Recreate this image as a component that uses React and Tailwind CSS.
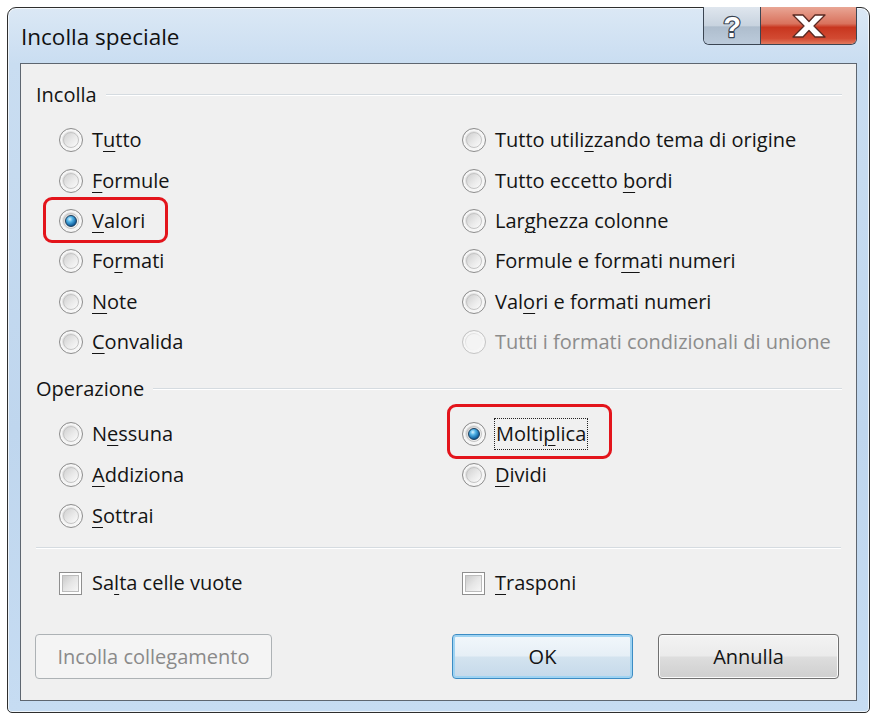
import React from 'react';

const FONT = { fontFamily: '"Open Sans", "Noto Sans", "Liberation Sans", sans-serif' };

// label with the mnemonic letter underlined
const Label = ({ text, u, disabled }) => {
  const cls = disabled ? 'text-[#8c8c8c]' : 'text-[#141414]';
  if (u < 0 || u === undefined) return <span className={cls}>{text}</span>;
  return (
    <span className={cls}>
      {text.slice(0, u)}
      <span className="underline decoration-1 underline-offset-[4px]">{text[u]}</span>
      {text.slice(u + 1)}
    </span>
  );
};

const Radio = ({ checked, disabled }) => (
  <span
    className={`relative shrink-0 w-[24px] h-[24px] rounded-full border ${
      disabled ? 'border-[#c4c4c4]' : 'border-[#8d8d8d]'
    } bg-[linear-gradient(135deg,#cfcfcf_0%,#eeeeee_50%,#ffffff_100%)] shadow-[inset_0_0_0_2px_#f6f6f6]`}
  >
    <span
      className={`absolute inset-[3px] rounded-full ${
        disabled
          ? 'bg-[#f4f4f4]'
          : 'bg-[linear-gradient(135deg,#d0d0d0_0%,#eaeaea_55%,#fbfbfb_100%)] border border-[#c4c4c4]'
      }`}
    />
    {checked && (
      <span className="absolute inset-[5px] rounded-full border border-[#1d3f5e] bg-[radial-gradient(circle_at_38%_32%,#d8f2ff_0%,#52b3e6_30%,#11609f_70%,#0a3a66_100%)]" />
    )}
  </span>
);

const Checkbox = () => (
  <span className="relative shrink-0 w-[23px] h-[23px] border border-[#8f8f8f] bg-white">
    <span className="absolute inset-[2px] border border-[#bcbcbc] bg-[linear-gradient(135deg,#cbcbcb_0%,#e6e6e6_50%,#f6f6f6_100%)]" />
  </span>
);

const RadioRow = ({ item }) => {
  if (!item) return <div />;
  const { text, u, checked, disabled, mark, focus } = item;
  return (
    <div className="relative flex items-center gap-[9px]">
      {mark === 'valori' && (
        <span className="absolute left-[-16px] top-[-4px] w-[125px] h-[46px] rounded-[9px] border-[3px] border-[#e3141b]" />
      )}
      {mark === 'molt' && (
        <span className="absolute left-[-15px] top-[-9px] w-[165px] h-[55px] rounded-[9px] border-[3px] border-[#e3141b]" />
      )}
      <Radio checked={checked} disabled={disabled} />
      <span className={focus ? 'outline outline-1 outline-dotted outline-[#222] px-[1px]' : ''}>
        <Label text={text} u={u} disabled={disabled} />
      </span>
    </div>
  );
};

const GroupHeader = ({ title, className }) => (
  <div className={`flex items-center h-[24px] pl-[15px] pr-[14px] ${className}`}>
    <span className="text-[#141414]">{title}</span>
    <span className="flex-1 ml-[9px] h-[2px] border-t border-[#d5dbe0] border-b border-b-white" />
  </div>
);

const pasteRows = [
  [{ text: 'Tutto', u: 1 }, { text: 'Tutto utilizzando tema di origine', u: 11 }],
  [{ text: 'Formule', u: 0 }, { text: 'Tutto eccetto bordi', u: 14 }],
  [{ text: 'Valori', u: 0, checked: true, mark: 'valori' }, { text: 'Larghezza colonne', u: 3 }],
  [{ text: 'Formati', u: 2 }, { text: 'Formule e formati numeri', u: 13 }],
  [{ text: 'Note', u: 0 }, { text: 'Valori e formati numeri', u: 3 }],
  [{ text: 'Convalida', u: 0 }, { text: 'Tutti i formati condizionali di unione', u: -1, disabled: true }],
];

const opRows = [
  [{ text: 'Nessuna', u: 1 }, { text: 'Moltiplica', u: 5, checked: true, mark: 'molt', focus: true }],
  [{ text: 'Addiziona', u: 0 }, { text: 'Dividi', u: 0 }],
  [{ text: 'Sottrai', u: 0 }, null],
];

const Button = ({ children, variant }) => {
  const styles = {
    disabled: 'border-[#adb2b5] bg-[#f4f4f4] text-[#8a8a8a]',
    default:
      'border-[#3c8cc4] text-[#141414] bg-[linear-gradient(#f2f7fb_0%,#e6eff6_48%,#d3e3ef_52%,#c5d9ea_100%)] shadow-[inset_0_0_0_2px_#9fd3f2]',
    normal:
      'border-[#707070] text-[#141414] bg-[linear-gradient(#f3f3f3_0%,#ebebeb_48%,#dddddd_52%,#cfcfcf_100%)] shadow-[inset_0_0_0_1px_#fbfbfb]',
  };
  return (
    <div className={`h-[45px] flex items-center justify-center rounded-[4px] border ${styles[variant]}`}>
      {children}
    </div>
  );
};

export default function App() {
  return (
    <div className="w-[875px] h-[720px] bg-white pl-[7px] pt-[7px]" style={FONT}>
      <div className="w-[863px] h-[706px] flex flex-col rounded-t-[9px] rounded-b-[5px] border border-[#2e2e2e] bg-[linear-gradient(180deg,#dbe8f5_0%,#c9ddf1_8%,#bfd6ee_60%,#c6dcf2_100%)] shadow-[inset_0_0_0_1px_rgba(255,255,255,0.7)] px-[12px] pb-[11px]">
        {/* title bar */}
        <div className="h-[55px] flex items-start justify-between">
          <div className="pl-[1px] pt-[14px] text-[22.5px] leading-[30px] text-[#111]">Incolla speciale</div>
          <div className="flex h-[38px] mt-[-1px] rounded-b-[6px] border border-t-0 border-[#3b4552] overflow-hidden">
            <div className="w-[57px] flex items-center justify-center border-r border-[#3b4552] bg-[linear-gradient(180deg,#dfe6ee_0%,#c8d3df_50%,#aebdcd_54%,#bccbdb_100%)]">
              <svg width="24" height="32" viewBox="0 0 24 32" overflow="visible">
                <text
                  x="12"
                  y="27"
                  textAnchor="middle"
                  fontSize="29"
                  fontWeight="700"
                  fontFamily="Liberation Sans, sans-serif"
                  fill="#fff"
                  stroke="#3b4552"
                  strokeWidth="2.4"
                  paintOrder="stroke"
                  strokeLinejoin="round"
                >
                  ?
                </text>
              </svg>
            </div>
            <div className="w-[95px] flex items-center justify-center bg-[linear-gradient(180deg,#e9a695_0%,#d9725d_45%,#c8361f_55%,#d24a32_85%,#e27a5e_100%)]">
              <svg width="38" height="26" viewBox="0 0 38 26">
                <path
                  d="M3 2h10l6 6.5 6-6.5h10l-11 11 11 11H25l-6-6.5-6 6.5H3l11-11z"
                  fill="#fff"
                  stroke="#5a2a22"
                  strokeWidth="1.3"
                  strokeLinejoin="round"
                />
              </svg>
            </div>
          </div>
        </div>

        {/* client area */}
        <div className="flex-1 flex flex-col border border-[#5e6670] bg-[#f0f0f0] text-[20px] pt-[19px]">
          <GroupHeader title="Incolla" />
          <div className="grid grid-cols-[403px_1fr] auto-rows-[40.4px] pl-[38px] mt-[13px]">
            {pasteRows.flatMap((pair, i) => [
              <RadioRow key={`l${i}`} item={pair[0]} />,
              <RadioRow key={`r${i}`} item={pair[1]} />,
            ])}
          </div>

          <GroupHeader title="Operazione" className="mt-[15px]" />
          <div className="grid grid-cols-[403px_1fr] auto-rows-[41px] pl-[38px] mt-[12px]">
            {opRows.flatMap((pair, i) => [
              <RadioRow key={`l${i}`} item={pair[0]} />,
              <RadioRow key={`r${i}`} item={pair[1]} />,
            ])}
          </div>

          <div className="mx-[15px] mt-[11px] h-[2px] border-t border-[#d5dbe0] border-b border-b-white" />

          <div className="grid grid-cols-[403px_1fr] h-[40px] pl-[38px] mt-[14px]">
            <div className="flex items-center gap-[10px]">
              <Checkbox />
              <Label text="Salta celle vuote" u={2} />
            </div>
            <div className="flex items-center gap-[10px]">
              <Checkbox />
              <Label text="Trasponi" u={0} />
            </div>
          </div>

          <div className="flex items-center pl-[14px] pr-[17px] mt-[31px]">
            <div className="w-[237px]">
              <Button variant="disabled">Incolla collegamento</Button>
            </div>
            <div className="flex-1" />
            <div className="w-[181px]">
              <Button variant="default">OK</Button>
            </div>
            <div className="w-[181px] ml-[25px]">
              <Button variant="normal">Annulla</Button>
            </div>
          </div>
        </div>
      </div>
    </div>
  );
}
